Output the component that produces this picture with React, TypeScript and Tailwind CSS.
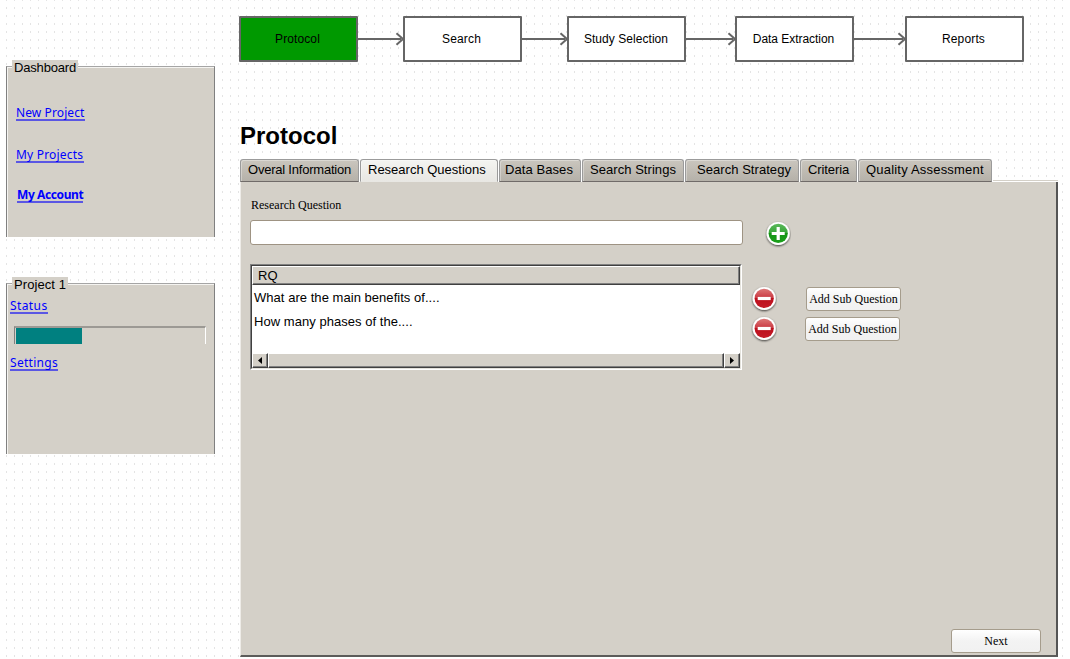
import React from "react";

const steps = [
  { label: "Protocol", gap: "w-0", tracking: "tracking-[0.1px]", active: true, nudge: "pr-0.5" },
  { label: "Search", gap: "w-[45px]", tracking: "tracking-[0.15px]", active: false, nudge: "pr-0.5" },
  { label: "Study Selection", gap: "w-[45px]", tracking: "tracking-[0.05px]", active: false, nudge: "pr-px" },
  { label: "Data Extraction", gap: "w-[49px]", tracking: "tracking-[-0.05px]", active: false, nudge: "pr-0.5" },
  { label: "Reports", gap: "w-[51px]", tracking: "tracking-[0.15px]", active: false, nudge: "pr-0.5" },
];

const tabs = [
  { label: "Overal Information", cls: "w-[119px] pl-[7px] tracking-[-0.22px]" },
  { label: "Research Questions", cls: "w-[138px] pl-[7px]" },
  { label: "Data Bases", cls: "w-[82px] pl-[5px] tracking-[0.08px]" },
  { label: "Search Strings", cls: "w-[102px] pl-[7px] tracking-[0.05px]" },
  { label: "Search Strategy", cls: "w-[114px] pl-[11px] tracking-[0.05px]" },
  { label: "Criteria", cls: "w-[57px] pl-[7px] tracking-[-0.1px]" },
  { label: "Quality Assessment", cls: "w-[134px] pl-[7px] tracking-[0.2px]" },
];

function Arrow({ width }: { width: string }) {
  return (
    <div className={`flex h-[46px] items-center ${width}`}>
      <div className="h-0.5 flex-1 bg-[#666]" />
      <svg className="-mr-0.5 -ml-1.5 h-3.5 w-2.5 shrink-0" viewBox="0 0 10 14" fill="none" stroke="#666" strokeWidth="2">
        <path d="M1.5 1.2 8 7 1.5 12.8" />
      </svg>
    </div>
  );
}

function GroupBox({ title, titleClass, className, children }: { title: string; titleClass: string; className: string; children: React.ReactNode }) {
  return (
    <section className={`w-[209px] border-t border-r border-l border-t-[#a5a5a5] border-r-[#808080] border-l-[#808080] bg-[#d4d0c8] shadow-[inset_1px_1px_0_#f5f4f1] ${className}`}>
      <h2 className={`-mt-[7px] ml-[5px] h-4 bg-[#d4d0c8] pl-0.5 text-[13px] leading-4 whitespace-nowrap ${titleClass}`}>{title}</h2>
      {children}
    </section>
  );
}

function Link({ children, className }: { children: string; className: string }) {
  return (
    <a className={`block h-[15px] border-b-2 border-[#5a56e4] font-['Comic_Sans_MS','Noto_Sans',sans-serif] text-[12px] leading-[13px] whitespace-nowrap text-[#0000ff] ${className}`}>
      {children}
    </a>
  );
}

function RoundIcon({ minus = false }: { minus?: boolean }) {
  const id = minus ? "remove" : "add";
  return (
    <svg className="block h-[28px] w-[26px]" viewBox="0 0 26 28">
      <defs>
        <linearGradient id={id} x2="0" y2="1">
          <stop offset="0" stopColor={minus ? "#dd7777" : "#5cb85c"} />
          <stop offset="0.49" stopColor={minus ? "#c93841" : "#35a535"} />
          <stop offset="0.5" stopColor={minus ? "#bb0f1c" : "#149314"} />
          <stop offset="1" stopColor={minus ? "#c51b28" : "#1ba01b"} />
        </linearGradient>
        <filter id={`${id}-shadow`} x="-20%" y="-20%" width="140%" height="150%">
          <feDropShadow dx="0" dy="1" stdDeviation="0.9" floodColor="#000" floodOpacity="0.75" />
        </filter>
      </defs>
      <circle cx="13.2" cy="13.4" r="11.5" fill="#fff" filter={`url(#${id}-shadow)`} />
      <circle cx="13.2" cy="13.4" r="9.6" fill={`url(#${id})`} />
      <path d={minus ? "M6.7 13.5h13" : "M6.7 13.5h13M13.2 7v13"} stroke="#fff" strokeWidth="3.2" />
    </svg>
  );
}

function Button({ children, className }: { children: string; className: string }) {
  return (
    <button className={`flex h-6 items-center justify-center rounded-[3px] border border-[#a59c8c] bg-linear-to-b from-white via-[#f3f3f3] to-[#f1f1f1] font-['Liberation_Serif',serif] text-[12px] leading-4 whitespace-nowrap ${className}`}>
      {children}
    </button>
  );
}

const raised = "border border-t-white border-l-white border-r-[#404040] border-b-[#404040] bg-[#d4d0c8]";

export default function App() {
  return (
    <div className="flex h-[659px] w-[1070px] overflow-hidden bg-white bg-[linear-gradient(#fff_0_6px,transparent_6px),linear-gradient(90deg,#fff_0_6px,#e4e4e4_6px_7px,#fff_7px)] bg-size-[8px_8px] bg-position-[0_1px] font-['Liberation_Sans',Arial,sans-serif] text-black">
      <aside className="w-[239px] shrink-0 pt-[66px] pl-1.5">
        <GroupBox title="Dashboard" titleClass="w-[66px] tracking-[-0.17px]" className="h-[171px]">
          <div className="flex flex-col items-start pt-[30px] pl-[9px]">
            <Link className="w-[69px] tracking-[0.1px]">New Project</Link>
            <Link className="mt-[27px] w-[68px] tracking-[0.2px]">My Projects</Link>
            <Link className="mt-[25px] ml-px w-[66px] font-bold tracking-[-0.4px]">My Account</Link>
          </div>
        </GroupBox>
        <GroupBox title="Project 1" titleClass="w-[56px] tracking-[0.08px]" className="mt-[46px] h-[171px]">
          <div className="flex flex-col items-start pt-[6px] pl-[3px]">
            <Link className="w-[38px] tracking-[0.4px]">Status</Link>
            <div className="mt-3 ml-1 h-[18px] w-[192px] border-t-2 border-r border-l border-t-[#9c9994] border-r-white border-l-[#808080] pl-px">
              <div className="h-4 w-[66px] bg-[#008080]" />
            </div>
            <Link className="mt-3 w-[48px] tracking-[0.3px]">Settings</Link>
          </div>
        </GroupBox>
      </aside>

      <main className="w-[819px] shrink-0 pt-4">
        <nav className="flex h-[46px]">
          {steps.map((s, i) => (
            <React.Fragment key={s.label}>
              {i > 0 && <Arrow width={s.gap} />}
              <div className={`flex w-[119px] items-center justify-center rounded-[1px] border-2 border-[#666] text-[12px] leading-4 ${s.nudge} ${s.tracking} ${s.active ? "bg-[#009900]" : "bg-white"}`}>
                {s.label}
              </div>
            </React.Fragment>
          ))}
        </nav>

        <h1 className="mt-[58px] h-[39px] pl-px text-[24px] leading-8 font-bold">Protocol</h1>

        <div className="flex h-[23px] gap-px pl-px">
          {tabs.map((t, i) => (
            <div
              key={t.label}
              className={`h-[23px] shrink-0 rounded-t-[3px] border border-[#9b9b9b] bg-linear-to-b pt-[2px] text-[13px] leading-4 whitespace-nowrap shadow-[inset_1px_1px_0_#ffffff55] ${t.cls} ${i === 1 ? "border-b-[#e8e7e3] from-[#f4f4f1] to-[#e8e7e3]" : "border-b-[#706b69] from-[#cac6be] to-[#b5b1a9]"}`}
            >
              {t.label}
            </div>
          ))}
          <div className="mt-[21px] h-0.5 flex-1 border-t border-[#d4d0c8] bg-white" />
        </div>

        <div className="ml-px flex h-[475px] w-[818px] flex-col border-r-2 border-b-2 border-l border-r-[#555] border-b-[#5c5c5a] border-l-[#eeece8] bg-[#d4d0c8] pl-[9px]">
          <label className="mt-[15px] h-4 pl-px font-['Liberation_Serif',serif] text-[12px] leading-4">Research Question</label>
          <div className="mt-[7px] flex h-[25px]">
            <input className="h-[25px] w-[493px] rounded-[3px] border border-[#9e9383] bg-white px-1 text-[13px] outline-none" />
            <div className="ml-[22px]">
              <RoundIcon />
            </div>
          </div>

          <div className="mt-[19px] flex h-[107px]">
            <div className="flex h-[106px] w-[492px] flex-col border border-t-[#808080] border-r-white border-b-white border-l-[#808080]">
              <div className="flex min-h-0 flex-1 flex-col border border-t-[#404040] border-r-[#e4e2dc] border-b-[#e4e2dc] border-l-[#404040] bg-white">
                <div className={`h-[19px] shrink-0 pl-[5px] text-[13px] leading-[17px] shadow-[inset_-1px_-1px_0_#808080] ${raised}`}>RQ</div>
                <div className="flex h-[68px] shrink-0 flex-col pt-px pl-0.5 text-[13px] leading-6">
                  <div className="tracking-[0.04px]">What are the main benefits of....</div>
                  <div className="tracking-[0.04px]">How many phases of the....</div>
                </div>
                <div className="flex h-[15px] shrink-0">
                  <div className={`flex w-4 shrink-0 items-center justify-center shadow-[inset_-1px_-1px_0_#808080] ${raised}`}>
                    <svg className="h-[7px] w-1" viewBox="0 0 4 7"><path d="M4 0v7L0 3.5Z" /></svg>
                  </div>
                  <div className={`flex-1 shadow-[inset_-1px_-1px_0_#808080] ${raised}`} />
                  <div className={`flex w-4 shrink-0 items-center justify-center shadow-[inset_-1px_-1px_0_#808080] ${raised}`}>
                    <svg className="h-[7px] w-1" viewBox="0 0 4 7"><path d="M0 0v7l4-3.5Z" /></svg>
                  </div>
                </div>
              </div>
            </div>
            <div className="ml-[9px] flex flex-col gap-0.5 pt-[21px]">
              <RoundIcon minus />
              <RoundIcon minus />
            </div>
            <div className="ml-7 flex flex-col gap-1.5 pt-[23px]">
              <Button className="ml-px w-[95px]">Add Sub Question</Button>
              <Button className="w-[95px]">Add Sub Question</Button>
            </div>
          </div>

          <Button className="mt-auto mr-[15px] mb-0.5 w-[90px] self-end">Next</Button>
        </div>
      </main>
    </div>
  );
}
